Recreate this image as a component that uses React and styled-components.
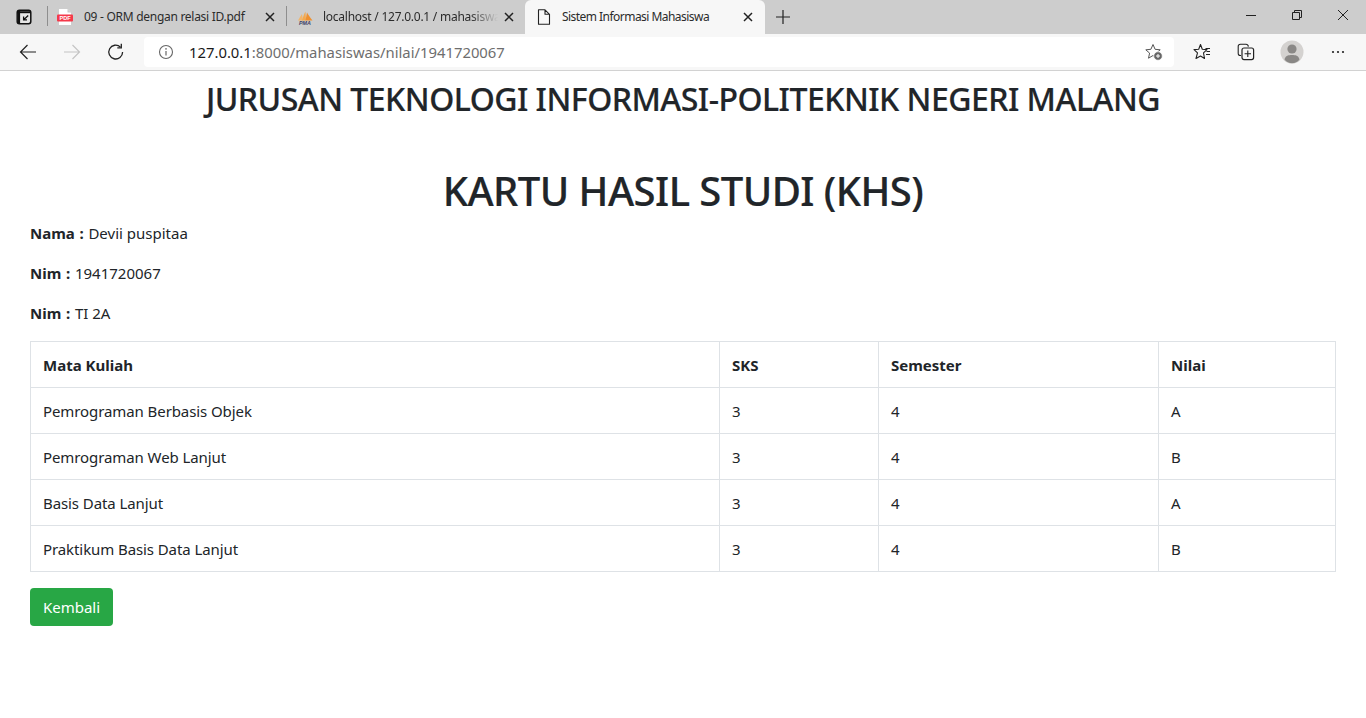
import React from "react";
import styled, { createGlobalStyle } from "styled-components";

const Global = createGlobalStyle`
  html, body { margin: 0; padding: 0; background: #fff; }
  body { font-family: "Noto Sans", "Open Sans", "Liberation Sans", sans-serif; color: #212529; overflow: hidden; }
  * { box-sizing: border-box; }
`;

const Shell = styled.div`width: 1366px; height: 718px; overflow: hidden; display: flex; flex-direction: column;`;

/* ---------- browser chrome ---------- */
const TabStrip = styled.div`height: 34px; background: #cdcdcd; display: flex; align-items: stretch;`;
const Lead = styled.div`width: 47px; display: flex; align-items: center; padding-left: 16px;`;
const Tab = styled.div`
  width: ${p => p.$w}px;
  display: flex; align-items: center; position: relative;
  background: ${p => (p.$active ? "#f7f7f7" : "transparent")};
  border-radius: ${p => (p.$active ? "6px 6px 0 0" : "0")};
  padding-left: ${p => p.$pad}px;
  ${p => p.$sep ? `&::before { content: ""; position: absolute; left: 0; top: 6px; height: 20px; width: 1px; background: #8e8e8e; }` : ""}
`;
const TabIcon = styled.span`width: 16px; height: 16px; display: flex; flex: none; margin-right: ${p => p.$gap}px;`;
const TabTitle = styled.span`
  flex: 1; min-width: 0; white-space: nowrap;
  font-size: 12px; line-height: 16px; color: #2b2b2b; letter-spacing: ${p => p.$ls}px;
  ${p => p.$fade ? `-webkit-mask-image: linear-gradient(90deg, #000 84%, transparent 100%); mask-image: linear-gradient(90deg, #000 84%, transparent 100%);` : ""}
`;
const TabClose = styled.span`width: 10px; height: 10px; display: flex; flex: none; margin: 0 ${p => p.$right}px 0 ${p => p.$left}px;`;
const NewTab = styled.div`width: 36px; display: flex; align-items: center; justify-content: center;`;
const Spacer = styled.div`flex: 1;`;
const WinBtn = styled.div`width: 46px; display: flex; align-items: center; justify-content: center; padding-bottom: 4px;`;

const Toolbar = styled.div`
  height: 37px; background: #f7f7f7; border-bottom: 1px solid #d2d2d2;
  display: flex; align-items: center; padding-left: 6px;
`;
const NavBtn = styled.div`width: 44px; height: 30px; display: flex; align-items: center; justify-content: center; flex: none;`;
const Omnibox = styled.div`
  width: 1030px; height: 30px; margin: 0 6px 0 6px; background: #fff; border-radius: 4px;
  display: flex; align-items: center; padding: 0 11px 0 14px; flex: none;
`;
const InfoSlot = styled.span`width: 16px; height: 16px; display: flex; margin-right: 15px;`;
const Url = styled.span`flex: 1; font-size: 14.83px; color: #6e6e6e; white-space: nowrap;`;
const Host = styled.span`color: #1a1a1a;`;
const Tools = styled.div`display: flex; align-items: center;`;
const ToolBtn = styled.div`width: ${p => p.$w}px; display: flex; align-items: center; justify-content: center;`;

/* ---------- page ---------- */
const Page = styled.main`flex: 1; padding: 9px 30px 0; background: #fff;`;
const Institute = styled.h2`
  margin: 0 0 49px; text-align: center; font-size: 32px; line-height: 38px; font-weight: 500; color: #212529;
  letter-spacing: -0.51px; -webkit-text-stroke: 0.2px #212529;
`;
const Title = styled.h1`
  margin: 0 0 6px; text-align: center; font-size: 40px; line-height: 48px; font-weight: 500; color: #212529;
  letter-spacing: -0.55px; -webkit-text-stroke: 0.2px #212529;
`;
const Line = styled.p`margin: 0 0 16px; font-size: 15px; line-height: 24px;`;
const Label = styled.b`font-weight: 700; word-spacing: 0.8px;`;
const Grid = styled.table`
  width: 1306px; table-layout: fixed; border-collapse: collapse; margin: 0 0 16px; font-size: 15px; color: #212529;
`;
const Head = styled.th`
  border: 1px solid #dee2e6; padding: 0 12px; height: 46px; text-align: left; font-weight: 700; line-height: 24px;
`;
const Cell = styled.td`border: 1px solid #dee2e6; padding: 0 12px; height: 46px; line-height: 24px; letter-spacing: -0.09px;`;
const Back = styled.a`
  display: inline-flex; align-items: center; justify-content: center; width: 83px; height: 38px;
  background: #28a745; color: #fff; border-radius: 4px; font-size: 15px; text-decoration: none;
`;

/* ---------- icons ---------- */
const Svg = ({ s = 16, w, h, children, vb }) => (
  <svg width={w || s} height={h || s} viewBox={vb || `0 0 ${s} ${s}`} fill="none" style={{ display: "block" }}>{children}</svg>
);
const CloseX = ({ c = "#222", sw = 1.5 }) => (
  <Svg s={10}><path d="M1 1L9 9M9 1L1 9" stroke={c} strokeWidth={sw} /></Svg>
);
const WorkspaceIcon = () => (
  <Svg s={16}>
    <rect x="1.2" y="1.2" width="13.6" height="13.6" rx="2.2" fill="#e6e6e6" stroke="#111" strokeWidth="1.5" />
    <path d="M1.2 3.2H14.8" stroke="#111" strokeWidth="2" />
    <path d="M3 2V14" stroke="#111" strokeWidth="2.2" />
    <path d="M12.2 6.6L8 10.4M7.6 7.6V10.9H11" stroke="#111" strokeWidth="1.3" />
  </Svg>
);
const PdfIcon = () => (
  <Svg s={16}>
    <path d="M2 0H10.5L14 3.5V16H2Z" fill="#fff" />
    <path d="M10.5 0V3.5H14Z" fill="#c9c9c9" />
    <rect x="0" y="5.5" width="16" height="7" rx="1" fill="#f5394a" />
    <text x="8" y="11" textAnchor="middle" fontSize="5.6" fontWeight="700" fill="#fff" fontFamily="Liberation Sans">PDF</text>
  </Svg>
);
const PmaIcon = () => (
  <Svg s={16}>
    <path d="M1 11.5C2.5 9 3.5 7 5 5L6 11.5Z" fill="#f2b56a" />
    <path d="M5 11.5C6 8 7.2 4.5 8.5 2.5L9 11.5Z" fill="#f3a94f" />
    <path d="M8.5 11.5L10 3.5C11 5.5 13.5 9 15.5 11.5Z" fill="#ee9030" />
    <text x="8" y="15.6" textAnchor="middle" fontSize="5.4" fontWeight="700" fontStyle="italic" fill="#3d3f66" fontFamily="Liberation Sans">PMA</text>
  </Svg>
);
const DocIcon = () => (
  <Svg s={16}>
    <path d="M2.5 .8H9L13.5 5.3V15.2H2.5Z M9 .8V5.3H13.5" stroke="#222" strokeWidth="1.1" strokeLinejoin="round" />
  </Svg>
);
const Plus = () => (
  <Svg s={16}><path d="M8 1V15M1 8H15" stroke="#222" strokeWidth="1.2" /></Svg>
);
const Arrow = ({ c, flip }) => (
  <Svg s={18}>
    <g transform={flip ? "matrix(-1 0 0 1 18 0)" : undefined}>
      <path d="M1.5 9H17M8.5 2L1.5 9L8.5 16" stroke={c} strokeWidth="1.2" />
    </g>
  </Svg>
);
const Reload = () => (
  <Svg s={18}>
    <path d="M15.6 9A6.9 6.9 0 1 1 13.4 4" stroke="#222" strokeWidth="1.3" />
    <path d="M14.3 0.8V4.8H10.3" stroke="#222" strokeWidth="1.3" />
  </Svg>
);
const Info = () => (
  <Svg s={16}>
    <circle cx="8" cy="8" r="6.5" stroke="#666" strokeWidth="1.1" />
    <path d="M8 7V11.6" stroke="#666" strokeWidth="1.2" />
    <circle cx="8" cy="4.9" r=".8" fill="#666" />
  </Svg>
);
const star = "M8 1.5L10.1 6.3L15.2 6.8L11.4 10.1L12.5 15.2L8 12.5L3.5 15.2L4.6 10.1L0.8 6.8L5.9 6.3Z";
const StarAdd = () => (
  <Svg s={18}>
    <path d={star} stroke="#555" strokeWidth="1" strokeLinejoin="round" />
    <circle cx="13" cy="13" r="4.3" fill="#666" stroke="#fff" strokeWidth=".8" />
    <path d="M13 11V15M11 13H15" stroke="#fff" strokeWidth="1" />
  </Svg>
);
const Favs = () => (
  <Svg s={18}>
    <path d="M7.5 1.5L9.3 6.2L14 6.6L10.5 9.8L11.5 15.5L7.5 13L3 15.5L4.5 9.8L1 6.6L5.7 6.2Z" stroke="#222" strokeWidth="1.1" strokeLinejoin="round" />
    <path d="M12.5 5.5H17M13.5 8.5H17M13 11.5H17" stroke="#222" strokeWidth="1.1" />
  </Svg>
);
const Collections = () => (
  <Svg s={18}>
    <path d="M4 12.5H3.5Q1.2 12.5 1.2 10.2V3.5Q1.2 1.2 3.5 1.2H9Q11 1.2 11.4 3.6" stroke="#222" strokeWidth="1.1" />
    <rect x="5" y="5" width="11.6" height="11.6" rx="2" stroke="#222" strokeWidth="1.2" fill="#f7f7f7" />
    <path d="M10.8 7.6V14M7.6 10.8H14" stroke="#222" strokeWidth="1.1" />
  </Svg>
);
const Avatar = () => (
  <Svg s={24}>
    <circle cx="12" cy="12" r="11.5" fill="#d4d2d0" />
    <circle cx="12" cy="9" r="4.6" fill="#8a8886" />
    <path d="M4.5 19.5C5.5 15.5 8.5 15 12 15S18.5 15.5 19.5 19.5C17.5 22 15 23.3 12 23.3S6.5 22 4.5 19.5Z" fill="#8a8886" />
  </Svg>
);
const Dots = () => (
  <Svg w={14} h={4} vb="0 0 14 4">
    <circle cx="2" cy="2" r="1.1" fill="#222" /><circle cx="7" cy="2" r="1.1" fill="#222" /><circle cx="12" cy="2" r="1.1" fill="#222" />
  </Svg>
);
const Minimize = () => <Svg s={12}><path d="M1 6.5H11" stroke="#222" /></Svg>;
const Restore = () => (
  <Svg s={12}><path d="M1.5 3.5H8.5V10.5H1.5ZM3.5 3.5V1.5H10.5V8.5H8.5" stroke="#222" /></Svg>
);
const WinClose = () => <Svg s={12}><path d="M1 1L11 11M11 1L1 11" stroke="#222" /></Svg>;

const rows = [
  ["Pemrograman Berbasis Objek", "3", "4", "A"],
  ["Pemrograman Web Lanjut", "3", "4", "B"],
  ["Basis Data Lanjut", "3", "4", "A"],
  ["Praktikum Basis Data Lanjut", "3", "4", "B"],
];

export default function App() {
  return (
    <Shell>
      <Global />
      <TabStrip>
        <Lead><WorkspaceIcon /></Lead>
        <Tab $w={239} $sep $pad={10}>
          <TabIcon $gap={11}><PdfIcon /></TabIcon>
          <TabTitle $ls={-0.28}>09 - ORM dengan relasi ID.pdf</TabTitle>
          <TabClose $left={4} $right={11}><CloseX /></TabClose>
        </Tab>
        <Tab $w={239} $sep $pad={11}>
          <TabIcon $gap={10}><PmaIcon /></TabIcon>
          <TabTitle $fade $ls={-0.25}>localhost / 127.0.0.1 / mahasiswa</TabTitle>
          <TabClose $left={6} $right={11}><CloseX /></TabClose>
        </Tab>
        <Tab $w={240} $active $pad={11}>
          <TabIcon $gap={10}><DocIcon /></TabIcon>
          <TabTitle $ls={-0.54}>Sistem Informasi Mahasiswa</TabTitle>
          <TabClose $left={6} $right={12}><CloseX /></TabClose>
        </Tab>
        <NewTab><Plus /></NewTab>
        <Spacer />
        <WinBtn><Minimize /></WinBtn>
        <WinBtn><Restore /></WinBtn>
        <WinBtn><WinClose /></WinBtn>
      </TabStrip>
      <Toolbar>
        <NavBtn><Arrow c="#222" /></NavBtn>
        <NavBtn><Arrow c="#c4c4c4" flip /></NavBtn>
        <NavBtn><Reload /></NavBtn>
        <Omnibox>
          <InfoSlot><Info /></InfoSlot>
          <Url><Host>127.0.0.1</Host>:8000/mahasiswas/nilai/1941720067</Url>
          <StarAdd />
        </Omnibox>
        <Tools>
          <ToolBtn $w={44}><Favs /></ToolBtn>
          <ToolBtn $w={44}><Collections /></ToolBtn>
          <ToolBtn $w={48}><Avatar /></ToolBtn>
          <ToolBtn $w={44}><Dots /></ToolBtn>
        </Tools>
      </Toolbar>
      <Page>
        <Institute>JURUSAN TEKNOLOGI INFORMASI-POLITEKNIK NEGERI MALANG</Institute>
        <Title>KARTU HASIL STUDI (KHS)</Title>
        <Line><Label>Nama : </Label>Devii puspitaa</Line>
        <Line><Label>Nim : </Label>1941720067</Line>
        <Line><Label>Nim : </Label>TI 2A</Line>
        <Grid>
          <colgroup>
            <col style={{ width: 689 }} /><col style={{ width: 159 }} /><col style={{ width: 280 }} /><col />
          </colgroup>
          <thead>
            <tr><Head>Mata Kuliah</Head><Head>SKS</Head><Head>Semester</Head><Head>Nilai</Head></tr>
          </thead>
          <tbody>
            {rows.map(r => (
              <tr key={r[0]}>{r.map((c, i) => <Cell key={i}>{c}</Cell>)}</tr>
            ))}
          </tbody>
        </Grid>
        <Back href="#">Kembali</Back>
      </Page>
    </Shell>
  );
}
